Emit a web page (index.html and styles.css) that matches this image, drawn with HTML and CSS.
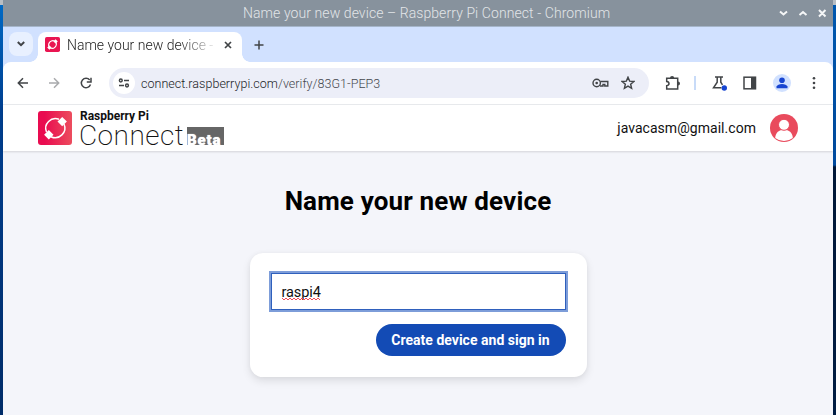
FILE: index.html
```html
<!DOCTYPE html>
<html lang="en">
<head>
<meta charset="utf-8">
<title>Name your new device – Raspberry Pi Connect</title>
<link rel="stylesheet" href="styles.css">
</head>
<body>
<div class="window">
  <div class="titlebar">
    <span class="window-title">Name your new device – Raspberry Pi Connect - Chromium</span>
    <svg class="window-controls" width="50" height="12" viewBox="0 0 50 12"><path d="M3 4.500l3.500 3 3.500-3M22.500 8l3.500-3 3.500 3M42 3l6.500 6.500M48.500 3l-6.500 6.500"/></svg>
  </div>
  <div class="tabstrip">
    <div class="tab-search"><svg width="10" height="8" viewBox="0 0 10 8"><path d="M1.800 2l3.200 3.200L8.200 2"/></svg></div>
    <div class="tab">
      <svg class="favicon" viewBox="0 0 34 34"><rect width="34" height="34" rx="4" fill="#e91551"/><g fill="none" stroke="#fff" stroke-width="2.600"><path d="M22 9A10 10 0 0 0 9 22M12 25A10 10 0 0 0 25 12"/></g><path fill="#fff" d="M24 5l5 5-5 5-5-5zM10 19l5 5-5 5-5-5z"/></svg>
      <span class="tab-label">Name your new device -</span>
      <svg class="tab-close" width="8" height="8" viewBox="0 0 8 8"><path d="M1 1l6 6M7 1L1 7"/></svg>
    </div>
    <svg class="new-tab" width="10" height="10" viewBox="0 0 10 10"><path d="M5 .5v9M.5 5h9"/></svg>
  </div>
  <div class="toolbar">
    <svg class="nav back" viewBox="0 0 12 12"><path d="M11 6H1.500M6 1.300L1.300 6 6 10.700"/></svg>
    <svg class="nav forward" viewBox="0 0 12 12"><path d="M1 6h9.500M6 1.300L10.700 6 6 10.700"/></svg>
    <svg class="nav reload" viewBox="0 0 12 12"><path d="M10.500 7.500A4.700 4.700 0 1 1 9.700 3"/><path d="M11 .8V5H6.800"/></svg>
    <div class="omnibox">
      <span class="site-info"><svg width="12" height="10" viewBox="0 0 12 10"><circle cx="2.800" cy="2.500" r="1.400"/><path d="M6 2.500h5M1 7.500h5"/><circle cx="9" cy="7.500" r="1.400"/></svg></span>
      <span class="url"><span class="host">connect.raspberrypi.com</span>/verify/83G1-PEP3</span>
      <svg class="key" width="17" height="10" viewBox="0 0 17 10"><circle cx="4.700" cy="5" r="3.700"/><circle cx="4.700" cy="5" r=".6"/><path d="M8.300 3.500h7.500v4.500h-3V6.500H11v1.500H8"/></svg>
      <svg class="star" width="14" height="14" viewBox="0 0 14 14"><path d="M7 1.200l1.650 3.900 4.200.36-3.200 2.760.97 4.130L7 10.150l-3.620 2.200.97-4.130-3.200-2.760 4.200-.36z"/></svg>
    </div>
    <svg class="puzzle" width="16" height="16" viewBox="0 0 16 16"><path d="M1.700 3.200H12.700V14H1.700V10.700Q4 10.500 4 8.600T1.700 6.500Z"/><path class="knob" d="M5 3a2.100 2 0 0 1 4.200 0zM13 6.400a2 2.100 0 0 1 0 4.200z"/></svg>
    <span class="divider"></span>
    <svg class="flask" width="16" height="16" viewBox="0 0 16 16"><path d="M3 2h8M5.200 2v5.200L1.500 12.800h8M8.800 2v5.200l1.700 2.600"/><circle cx="12.300" cy="13" r="2.700"/></svg>
    <svg class="side-panel" width="14" height="14" viewBox="0 0 14 14"><rect x="1" y="1.200" width="11.500" height="11.600"/><path d="M8 1h5v12H8z"/></svg>
    <svg class="profile" width="18" height="18" viewBox="0 0 18 18"><circle cx="9" cy="9" r="9" fill="#d1e1ff"/><circle cx="9" cy="6.300" r="2.800"/><path d="M3.500 14.200v-1.700Q4.700 10 9 10t5.500 2.500v1.700z"/></svg>
    <svg class="more" width="4" height="14" viewBox="0 0 4 14"><circle cx="2" cy="2.200" r="1.300"/><circle cx="2" cy="7" r="1.300"/><circle cx="2" cy="11.800" r="1.300"/></svg>
  </div>
  <header class="site-header">
    <svg class="logo" width="34" height="34" viewBox="0 0 34 34"><defs><linearGradient id="logo-fill"><stop offset=".2" stop-color="#e90c50"/><stop offset="1" stop-color="#ec4d5e"/></linearGradient></defs><rect width="34" height="34" rx="3" fill="url(#logo-fill)"/><g fill="none" stroke="#fff" stroke-width="1.500"><path d="M21 8.300A9.700 9.700 0 0 0 8.500 21M13 25.700A9.700 9.700 0 0 0 26 13"/></g><path fill="#fff" d="M24.200 6l4.700 4.600-4.700 4.600-4.700-4.600zM10.800 19l4.700 4.700-4.700 4.700-4.700-4.700z"/></svg>
    <div class="brand">
      <div class="brand-top">Raspberry Pi</div>
      <div class="brand-row"><span class="brand-name">Connect</span><span class="beta">Beta</span></div>
    </div>
    <span class="email">javacasm@gmail.com</span>
    <svg class="avatar" width="28" height="28" viewBox="0 0 28 28"><circle cx="14" cy="14" r="14" fill="#e94b5d"/><path d="M5.200 24C5.500 18.500 9 15.700 14 15.700S22.500 18.500 22.800 24Q19 27 14 27T5.200 24Z" fill="#fff"/><circle cx="14" cy="10.800" r="5.500" fill="#fff" stroke="#e94b5d" stroke-width="1"/></svg>
  </header>
  <main>
    <h1>Name your new device</h1>
    <form class="card">
      <div class="field"><span>raspi4</span><svg class="spelling" width="39" height="4" viewBox="0 0 39 4"><path d="M0 1l2 2 2-2 2 2 2-2 2 2 2-2 2 2 2-2 2 2 2-2 2 2 2-2 2 2 2-2 2 2 2-2 2 2 2-2 2 2"/></svg></div>
      <button type="button">Create device and sign in</button>
    </form>
  </main>
</div>
</body>
</html>
```
FILE: styles.css
```css
* { box-sizing: border-box; }
body {
  margin: 0;
  height: 415px;
  overflow: hidden;
  padding: 0 3px;
  font-family: Roboto, "Liberation Sans", sans-serif;
  background:
    linear-gradient(#b9bec3 0 5px, #0069c4 5px, #003f90 110px, #002c68 415px) left / 3px 100% no-repeat,
    linear-gradient(#b9bec3 0 5px, #0057ae 5px, #004a9e 165px, #001737 167px, #001c42) right / 3px 100% no-repeat;
}
svg { display: block; flex: none; fill: none; stroke: #414447; stroke-width: 1.5; }
.window { height: 415px; display: flex; flex-direction: column; background: linear-gradient(#d1e1ff 0 80px, #f4f5fa 80px); }
.titlebar { height: 27px; flex: none; background: #87929d; border-bottom: 1px solid #a5b5c9; display: flex; align-items: center; padding-left: 240px; }
.window-title { color: #e2e5e8; font-size: 14px; font-weight: 300; letter-spacing: .08px; white-space: nowrap; }
.window-controls { margin-left: auto; margin-right: 6px; stroke: #f5f6f7; stroke-width: 2; }
.tabstrip { height: 35px; flex: none; display: flex; align-items: flex-start; padding: 5px 0 0 6px; }
.tab-search { width: 24px; height: 24px; border-radius: 8px; background: #e8f0ff; display: grid; place-items: center; }
.tab-search svg { stroke-width: 2; }
.tab { position: relative; margin-left: 5px; width: 204px; height: 30px; border-radius: 8px 8px 0 0; background: #fff; display: flex; align-items: center; padding: 0 10px 5px 7px; }
.tab::before, .tab::after { content: ""; position: absolute; bottom: 0; width: 8px; height: 8px; }
.tab::before { left: -8px; background: radial-gradient(circle at 0 0, transparent 7.5px, #fff 8px); }
.tab::after { right: -8px; background: radial-gradient(circle at 100% 0, transparent 7.5px, #fff 8px); }
.favicon { width: 15px; height: 15px; stroke: none; }
.tab-label { margin-left: 7px; width: 152px; white-space: nowrap; font-size: 14px; font-weight: 300; letter-spacing: 0; color: #222; -webkit-mask-image: linear-gradient(90deg, #000 112px, transparent 152px); mask-image: linear-gradient(90deg, #000 112px, transparent 152px); }
.tab-close { margin-left: auto; stroke-width: 1.7; }
.new-tab { margin: 8px 0 0 12px; }
.toolbar { height: 43px; flex: none; border-radius: 8px 8px 0 0; background: #fff; border-bottom: 1px solid #e9ebee; display: flex; align-items: center; padding-left: 14px; }
.nav { width: 12px; height: 12px; }
.forward { margin-left: 19px; stroke: #a9abad; }
.reload { margin-left: 20px; }
.omnibox { margin-left: 17px; width: 540px; height: 30px; border-radius: 15px; background: #eceef8; display: flex; align-items: center; padding: 0 14px 0 4px; }
.site-info { width: 22px; height: 22px; border-radius: 50%; background: #fff; display: grid; place-items: center; }
.url { margin-left: 6px; font-size: 12.500px; font-weight: 300; letter-spacing: .03px; color: #45484e; white-space: nowrap; }
.host { color: #202226; }
.key { margin-left: auto; stroke-width: 1.4; }
.star { margin-left: 12px; stroke-width: 1.4; }
.puzzle { margin-left: 16px; }
.puzzle .knob { fill: #414447; stroke: none; }
.divider { width: 1.5px; height: 14px; margin-left: 13px; background: #c8dbf8; }
.flask { margin-left: 16px; }
.flask circle, .profile { fill: #1745d1; stroke: none; }
.side-panel { margin-left: 15.500px; }
.side-panel path { fill: #414447; stroke: none; }
.profile { margin-left: 16px; }
.more { margin-left: 21px; }
.more circle { fill: #414447; stroke: none; }
.site-header { height: 46px; flex: none; background: #fff; box-shadow: 0 1px 2px #0002; display: flex; align-items: center; padding: 0 35px; z-index: 1; }
.logo, .avatar { stroke: none; }
.brand { margin-left: 8px; height: 41px; color: #111; }
.brand-top { height: 15px; line-height: 17px; font-size: 12px; font-weight: 700; letter-spacing: -.02px; }
.brand-row { display: flex; height: 26px; align-items: flex-start; }
.brand-name { margin-left: -1px; width: 106px; line-height: 26px; font-size: 28px; font-weight: 200; letter-spacing: .45px; }
.beta { margin-left: 2px; margin-top: 4px; width: 37px; height: 18px; background: #666; color: #fff; font-size: 15px; font-weight: 900; line-height: 26px; text-shadow: 0 0 1px #fff; letter-spacing: .8px; }
.email { margin-left: auto; font-size: 14px; letter-spacing: .04px; color: #111; }
.avatar { margin-left: 14px; }
main { flex: 1; display: flex; flex-direction: column; align-items: center; }
h1 { margin: 35px 0 0; height: 31px; line-height: 31px; font-size: 26px; font-weight: 700; letter-spacing: .15px; color: #000; }
.card { margin-top: 36px; width: 337px; height: 124px; padding: 18px 19px 0; border-radius: 13px; background: #fff; box-shadow: 0 4px 9px #0000001a, 0 0 5px #0000000a; display: flex; flex-direction: column; }
.field { width: 299px; height: 41px; border: 2px solid #7d9dd9; box-shadow: inset 0 0 0 1px #2f60bd; background: #fff; padding: 0 11px; font-size: 14.500px; line-height: 39px; letter-spacing: -.1px; position: relative; color: #111; }
.spelling { position: absolute; left: 11px; top: 24px; stroke: #f34b57; stroke-width: 1; }
button { align-self: flex-end; margin: 12px 2px 0 0; width: 190px; height: 32px; padding: 0; border: 0; border-radius: 16px; background: #134bb5; color: #fff; font: 700 14px Roboto, "Liberation Sans", sans-serif; letter-spacing: .02px; white-space: nowrap; }
```
